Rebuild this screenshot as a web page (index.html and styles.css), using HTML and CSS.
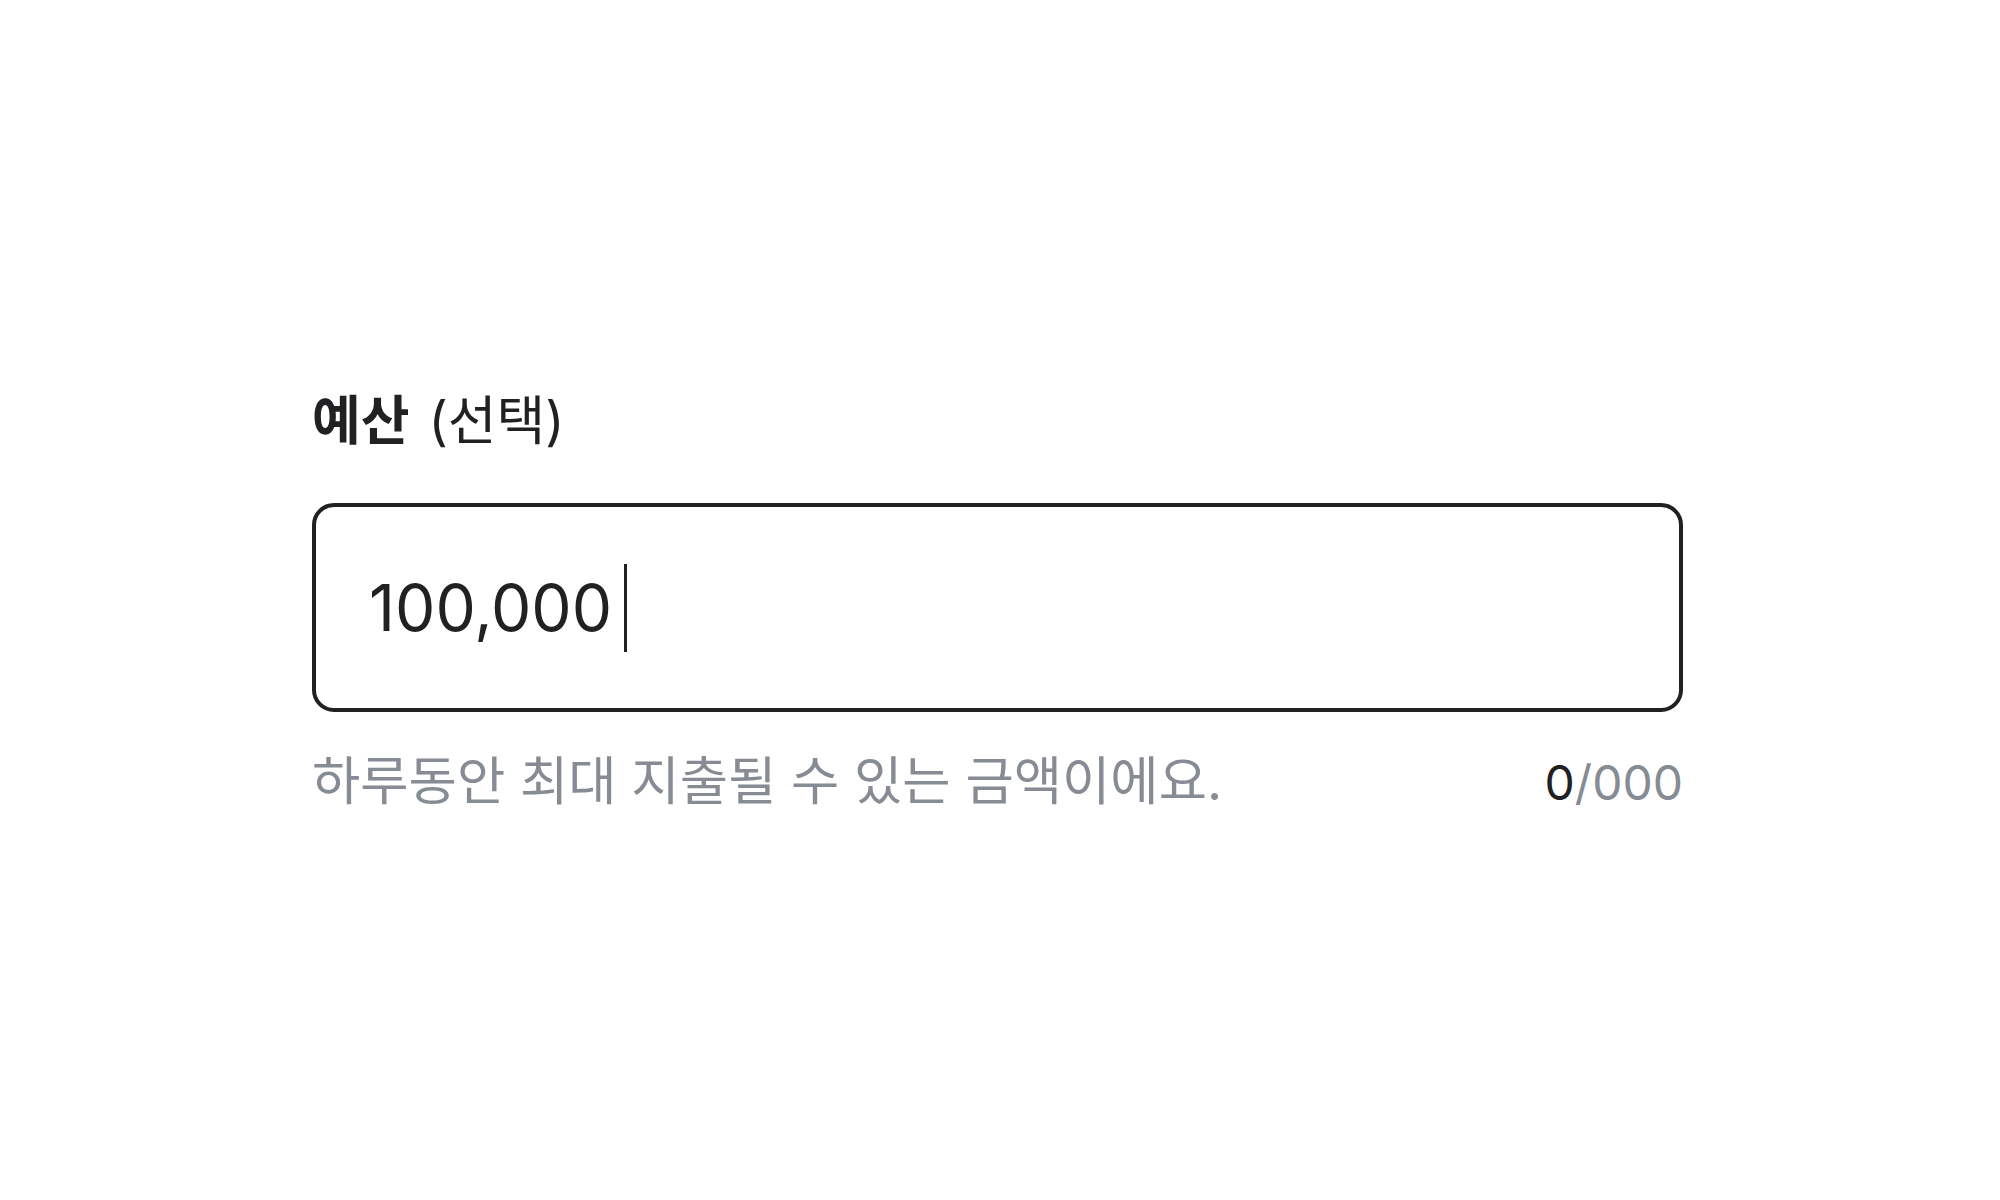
FILE: index.html
```html
<!DOCTYPE html>
<html lang="ko">
<head>
<meta charset="utf-8">
<link rel="stylesheet" href="styles.css">
</head>
<body>
<div class="field">
  <div class="label"><span class="label-main">예산</span> <span class="label-sub">(선택)</span></div>
  <div class="input">
    <span class="value">100,000</span><span class="caret"></span>
  </div>
  <div class="help-row">
    <span class="help">하루동안 최대 지출될 수 있는 금액이에요.</span>
    <span class="count"><span class="count-cur">0</span>/000</span>
  </div>
</div>
</body>
</html>
```
FILE: styles.css
```css
html, body {
  margin: 0;
  padding: 0;
  background: #ffffff;
}
body {
  font-family: Inter, "Noto Sans CJK KR", sans-serif;
  color: #212124;
}
.field {
  width: 1371px;
  margin-left: 312px;
  padding-top: 382px;
  display: flex;
  flex-direction: column;
}
.label {
  font-size: 53px;
  line-height: 78px;
  height: 78px;
}
.label-main {
  font-weight: 700;
  margin-right: 4px;
}
.label-sub {
  font-weight: 400;
}
.input {
  margin-top: 43px;
  height: 209px;
  box-sizing: border-box;
  border: 4px solid #212124;
  border-radius: 22px;
  display: flex;
  align-items: center;
  padding-left: 53px;
}
.value {
  font-size: 64px;
  line-height: 88px;
  color: #212124;
}
.caret {
  width: 3px;
  height: 88px;
  background: #212124;
  margin-left: 12px;
}
.help-row {
  margin-top: 30px;
  display: flex;
  justify-content: space-between;
  align-items: baseline;
  line-height: 78px;
  color: #868b94;
}
.help {
  font-size: 52.5px;
}
.count {
  font-size: 48px;
}
.count-cur {
  color: #212124;
}
```
